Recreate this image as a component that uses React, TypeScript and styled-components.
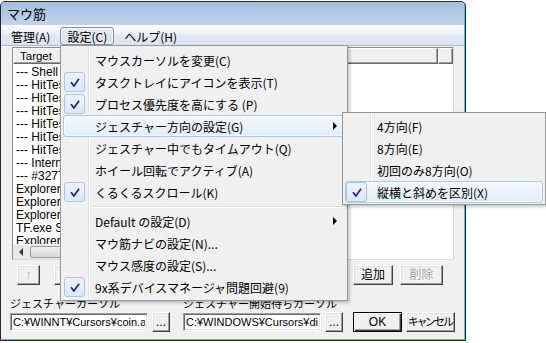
import React from "react";
import styled, { createGlobalStyle, css } from "styled-components";

const UI_FONT = `"Noto Sans CJK JP", "Noto Sans", sans-serif`;
const DLG_FONT = `"Liberation Sans", "Noto Sans CJK JP", sans-serif`;

const GlobalStyle = createGlobalStyle`
  *, *::before, *::after { box-sizing: border-box; }
  html, body { margin: 0; padding: 0; background: #ffffff; }
  body { font-family: ${UI_FONT}; }
`;

const Page = styled.div`
  position: relative;
  width: 546px;
  height: 343px;
  padding-top: 1px;
  overflow: hidden;
  background: #fff;
`;

const Window = styled.div`
  width: 466px;
  height: 340px;
  display: flex;
  flex-direction: column;
  border: 1px solid #23272d;
  border-radius: 5px 5px 0 0;
  padding: 0 1px 1px 0;
  background: #45c3ec;
  overflow: hidden;
`;

const TitleBar = styled.div`
  height: 23px;
  flex: none;
  display: flex;
  align-items: center;
  padding-left: 6px;
  background: linear-gradient(#a2bcdc, #c3d5ea);
  font: 13px ${UI_FONT};
  color: #000;
`;

const MenuBar = styled.div`
  height: 21px;
  flex: none;
  display: flex;
  align-items: flex-end;
  gap: 3px;
  padding-left: 3px;
  border-bottom: 1px solid #b1b9c6;
  background: linear-gradient(#fbfcfe 0%, #f1f4fa 35%, #e1e7f4 55%, #dce3f2 100%);
`;

const MenuBarItem = styled.div<{ $active?: boolean }>`
  height: 18px;
  padding: 0 6px;
  display: flex;
  align-items: center;
  border: 1px solid transparent;
  border-radius: 3px;
  font: 12px ${UI_FONT};
  color: #000;
  ${(p) =>
    p.$active &&
    css`
      border-color: #8693a3;
      background: linear-gradient(#e6ebf2, #d9e0ea);
      box-shadow: inset 0 0 0 1px rgba(255, 255, 255, 0.55);
    `}
`;

const Body = styled.div`
  flex: 1;
  display: flex;
  flex-direction: column;
  padding-top: 1px;
  background: #f0f0f0;
  font: 11px ${DLG_FONT};
  color: #000;
`;

const ListsRow = styled.div`
  height: 213px;
  flex: none;
  display: flex;
  gap: 5px;
  padding: 0 10px 0 11px;
`;

const ListView = styled.div<{ $width?: number }>`
  ${(p) => (p.$width ? `width: ${p.$width}px; flex: none;` : "flex: 1;")}
  display: flex;
  flex-direction: column;
  background: #fff;
  border: 1px solid;
  border-color: #8e8e8e #dadada #dadada #8e8e8e;
  overflow: hidden;
`;

const Header = styled.div`
  height: 16px;
  flex: none;
  display: flex;
`;

const HeaderCell = styled.div<{ $width?: number }>`
  ${(p) => (p.$width ? `width: ${p.$width}px; flex: none;` : "flex: 1;")}
  display: flex;
  align-items: center;
  padding-left: 6px;
  background: #f0f0f0;
  border: 1px solid;
  border-color: #ffffff #696969 #696969 #ffffff;
  box-shadow: inset -1px -1px 0 #a0a0a0;
  font: 11.5px ${DLG_FONT};
  white-space: nowrap;
`;

const Rows = styled.div`
  flex: 1;
  padding-top: 1px;
  overflow: hidden;
`;

const Row = styled.div`
  height: 13px;
  line-height: 13px;
  padding-left: 3px;
  white-space: nowrap;
  font: 12px ${DLG_FONT};
`;

const HScroll = styled.div`
  height: 15px;
  flex: none;
  display: flex;
  align-items: stretch;
  background: #e8e8e8;
  border-top: 1px solid #f4f4f4;
`;

const ScrollArrow = styled.div`
  width: 16px;
  display: flex;
  align-items: center;
  justify-content: center;
  &::before {
    content: "";
    border-right: 4px solid #3a3a3a;
    border-top: 4px solid transparent;
    border-bottom: 4px solid transparent;
  }
`;

const ScrollThumb = styled.div`
  width: 96px;
  margin: 1px 0 1px 1px;
  border: 1px solid #9b9b9b;
  border-radius: 2px;
  background: linear-gradient(#f3f3f3, #e2e2e2 50%, #d7d7d7);
`;

const ButtonRow = styled.div`
  height: 20px;
  flex: none;
  margin-top: 5px;
  display: flex;
  align-items: stretch;
  padding: 0 21px 0 16px;
`;

const Spacer = styled.div`
  flex: 1;
`;

const Btn = styled.button<{ $w: number; $default?: boolean; $ml?: number }>`
  width: ${(p) => p.$w}px;
  margin-left: ${(p) => p.$ml ?? 0}px;
  height: 20px;
  flex: none;
  padding: 0;
  font: 12px ${DLG_FONT};
  color: #000;
  background: #f0f0f0;
  border: 1px solid;
  border-color: #ffffff #404040 #404040 #ffffff;
  box-shadow: inset -1px -1px 0 #a0a0a0, inset 1px 1px 0 #e3e3e3;
  line-height: 16px;
  white-space: nowrap;
  ${(p) =>
    p.$default &&
    css`
      border-color: #000;
      box-shadow: inset 1px 1px 0 #ffffff, inset -1px -1px 0 #404040, inset -2px -2px 0 #a0a0a0;
    `}
  &:disabled {
    color: #a0a0a0;
    text-shadow: 1px 1px 0 #ffffff;
  }
`;

const NarrowText = styled.span`
  font-feature-settings: "palt";
  letter-spacing: -1px;
  font-size: 11px;
`;

const BottomRow = styled.div`
  flex: none;
  margin-top: 10px;
  display: flex;
  align-items: flex-end;
  padding: 0 9px 0 9px;
`;

const Field = styled.div<{ $ml?: number }>`
  display: flex;
  flex-direction: column;
  gap: 4px;
  margin-left: ${(p) => p.$ml ?? 0}px;
`;

const FieldLabel = styled.div`
  height: 13px;
  line-height: 13px;
  font: 11px ${UI_FONT};
  white-space: nowrap;
`;

const InputRow = styled.div`
  height: 20px;
  display: flex;
  align-items: center;
  gap: 4px;
`;

const TextInput = styled.input`
  width: 138px;
  height: 18px;
  padding: 0 2px;
  border: 1px solid;
  border-color: #a0a0a0 #ffffff #ffffff #a0a0a0;
  box-shadow: inset 1px 1px 0 #696969, inset -1px -1px 0 #e3e3e3;
  background: #fff;
  font: 11px ${DLG_FONT};
  color: #000;
  outline: none;
`;

/* ---------- popup menus ---------- */

const Menu = styled.div<{ $left: number; $top: number; $w: number; $pad: string }>`
  position: absolute;
  left: ${(p) => p.$left}px;
  top: ${(p) => p.$top}px;
  width: ${(p) => p.$w}px;
  padding: ${(p) => p.$pad};
  border: 1px solid #979797;
  background: linear-gradient(
    to right,
    #f0f0f0 0 27px,
    #e2e3e3 27px 28px,
    #ffffff 28px 29px,
    #f0f0f0 29px
  );
  box-shadow: 2px 2px 3px rgba(0, 0, 0, 0.22);
  font: 12px ${UI_FONT};
  color: #000;
`;

const MenuItem = styled.div<{ $hot?: boolean }>`
  position: relative;
  height: 22px;
  display: flex;
  align-items: center;
  white-space: nowrap;
  border: 1px solid transparent;
  border-radius: 3px;
  ${(p) =>
    p.$hot &&
    css`
      border-color: #a8c8ee;
      background: linear-gradient(#f3f8fe, #e2edfa);
      box-shadow: inset 0 0 0 1px rgba(255, 255, 255, 0.6);
    `}
`;

const CheckSlot = styled.div<{ $on?: boolean }>`
  width: 21px;
  height: 20px;
  flex: none;
  display: flex;
  align-items: center;
  justify-content: center;
  border-radius: 3px;
  border: 1px solid transparent;
  ${(p) =>
    p.$on &&
    css`
      border-color: #a9c5e8;
      background: linear-gradient(#ecf2fb, #dde8f6);
    `}
`;

const ItemLabel = styled.span`
  margin-left: 10px;
`;

const SubArrow = styled.span`
  margin-left: auto;
  margin-right: 7px;
  width: 0;
  height: 0;
  border-left: 4px solid #000;
  border-top: 4px solid transparent;
  border-bottom: 4px solid transparent;
`;

const Separator = styled.div`
  height: 7px;
  display: flex;
  align-items: center;
  padding-left: 30px;
  &::after {
    content: "";
    flex: 1;
    height: 2px;
    border-top: 1px solid #e0e0e0;
    border-bottom: 1px solid #ffffff;
  }
`;

const CheckMark = () => (
  <svg width="10" height="9" viewBox="0 0 10 9">
    <path
      d="M1 4.2 L3.9 8 L9 0.8"
      fill="none"
      stroke="#1b2a80"
      strokeWidth="1.7"
      strokeLinejoin="miter"
    />
  </svg>
);

type Entry =
  | { sep: true }
  | { label: string; checked?: boolean; sub?: boolean; hot?: boolean };

const mainMenu: Entry[] = [
  { label: "マウスカーソルを変更(C)" },
  { label: "タスクトレイにアイコンを表示(T)", checked: true },
  { label: "プロセス優先度を高にする (P)", checked: true },
  { label: "ジェスチャー方向の設定(G)", sub: true, hot: true },
  { label: "ジェスチャー中でもタイムアウト(Q)" },
  { label: "ホイール回転でアクティブ(A)" },
  { label: "くるくるスクロール(K)", checked: true },
  { sep: true },
  { label: "Default の設定(D)", sub: true },
  { label: "マウ筋ナビの設定(N)..." },
  { label: "マウス感度の設定(S)..." },
  { label: "9x系デバイスマネージャ問題回避(9)", checked: true },
];

const subMenu: Entry[] = [
  { label: "4方向(F)" },
  { label: "8方向(E)" },
  { label: "初回のみ8方向(O)" },
  { label: "縦横と斜めを区別(X)", checked: true, hot: true },
];

const renderEntries = (entries: Entry[]) =>
  entries.map((e, i) =>
    "sep" in e ? (
      <Separator key={i} />
    ) : (
      <MenuItem key={i} $hot={e.hot}>
        <CheckSlot $on={e.checked}>{e.checked && <CheckMark />}</CheckSlot>
        <ItemLabel>{e.label}</ItemLabel>
        {e.sub && <SubArrow />}
      </MenuItem>
    )
  );

const targets = [
  "--- Shell",
  "--- HitTest",
  "--- HitTest",
  "--- HitTest",
  "--- HitTest",
  "--- HitTest",
  "--- HitTest",
  "--- Internet",
  "--- #32770",
  "Explorer.exe",
  "Explorer.exe",
  "Explorer.exe",
  "TF.exe SysList",
  "Explorer.exe",
];

export default function App() {
  return (
    <>
      <GlobalStyle />
      <Page>
        <Window>
          <TitleBar>マウ筋</TitleBar>
          <MenuBar>
            <MenuBarItem>管理(A)</MenuBarItem>
            <MenuBarItem $active>設定(C)</MenuBarItem>
            <MenuBarItem>ヘルプ(H)</MenuBarItem>
          </MenuBar>
          <Body>
            <ListsRow>
              <ListView $width={161}>
                <Header>
                  <HeaderCell $width={120}>Target</HeaderCell>
                  <HeaderCell />
                </Header>
                <Rows>
                  {targets.map((t, i) => (
                    <Row key={i}>{t}</Row>
                  ))}
                </Rows>
                <HScroll>
                  <ScrollArrow />
                  <ScrollThumb />
                </HScroll>
              </ListView>
              <ListView>
                <Header>
                  <HeaderCell $width={259} />
                  <HeaderCell />
                </Header>
                <Rows />
              </ListView>
            </ListsRow>
            <ButtonRow>
              <Btn $w={23} disabled>
                ↑
              </Btn>
              <Btn $w={23} $ml={14} disabled>
                ↓
              </Btn>
              <Spacer />
              <Btn $w={40}>追加</Btn>
              <Btn $w={43} $ml={7} disabled>
                削除
              </Btn>
            </ButtonRow>
            <BottomRow>
              <Field>
                <FieldLabel>ジェスチャーカーソル</FieldLabel>
                <InputRow>
                  <TextInput readOnly value="C:¥WINNT¥Cursors¥coin.ani" />
                  <Btn $w={18}>...</Btn>
                </InputRow>
              </Field>
              <Field $ml={13}>
                <FieldLabel>ジェスチャー開始待ちカーソル</FieldLabel>
                <InputRow>
                  <TextInput readOnly value="C:¥WINDOWS¥Cursors¥dinosaur.ani" />
                  <Btn $w={18}>...</Btn>
                </InputRow>
              </Field>
              <Btn $w={49} $ml={10} $default>
                OK
              </Btn>
              <Btn $w={49} $ml={4}>
                <NarrowText>キャンセル</NarrowText>
              </Btn>
            </BottomRow>
          </Body>
        </Window>

        <Menu $left={60} $top={45} $w={288} $pad="3px 2px 2px">
          {renderEntries(mainMenu)}
        </Menu>
        <Menu $left={342} $top={112} $w={204} $pad="2px 2px 1px">
          {renderEntries(subMenu)}
        </Menu>
      </Page>
    </>
  );
}
